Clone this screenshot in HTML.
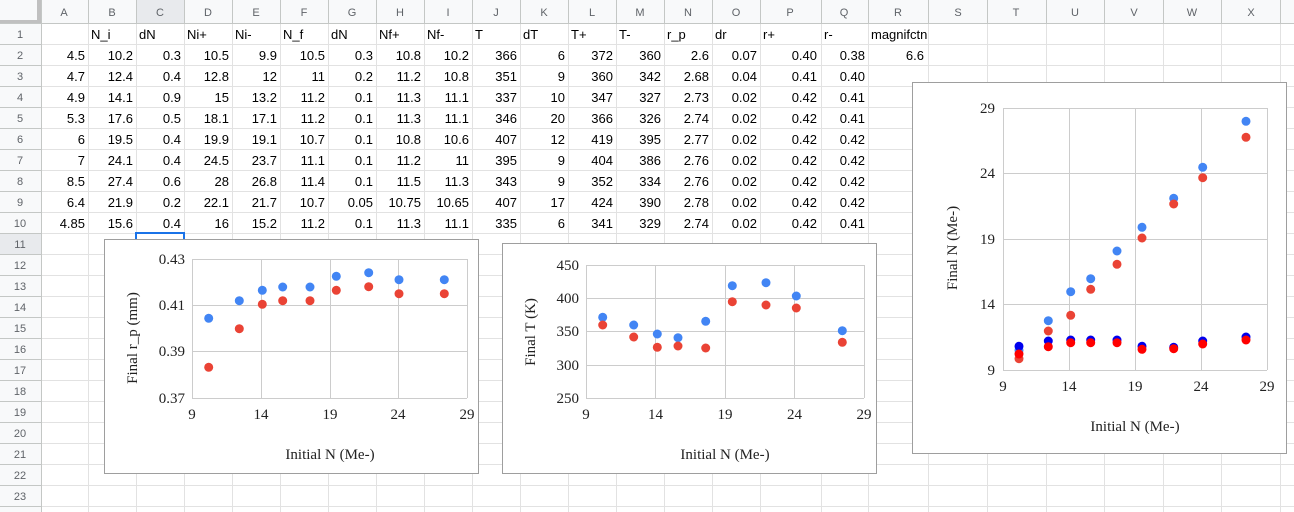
<!DOCTYPE html>
<html><head><meta charset="utf-8"><style>
html,body{margin:0;padding:0;background:#fff;width:1294px;height:512px;overflow:hidden}
svg{display:block}
.h{font-family:"Liberation Sans",sans-serif;font-size:11px;fill:#5f6368;text-anchor:middle}
.c{font-family:"Liberation Sans",sans-serif;font-size:13px;fill:#000}
.r{text-anchor:end}
.t{font-family:"Liberation Serif",serif;font-size:15px;fill:#222}
</style></head><body>
<svg width="1294" height="512" xmlns="http://www.w3.org/2000/svg">
<rect width="1294" height="512" fill="#fff"/>
<!-- header fills -->
<rect x="0" y="0" width="1294" height="23" fill="#f8f9fa"/>
<rect x="0" y="0" width="41" height="512" fill="#f8f9fa"/>
<rect x="136" y="0" width="48" height="23" fill="#e8eaed"/>
<rect x="0" y="233" width="41" height="21" fill="#e8eaed"/>
<g stroke="#e2e2e2" stroke-width="1">
<path d="M41.5 23V512M88.5 23V512M136.5 23V512M184.5 23V512M232.5 23V512M280.5 23V512M328.5 23V512M376.5 23V512M424.5 23V512M472.5 23V512M520.5 23V512M568.5 23V512M616.5 23V512M664.5 23V512M712.5 23V512M760.5 23V512M821.5 23V512M868.5 23V512M928.5 23V512M987.5 23V512M1046.5 23V512M1104.5 23V512M1163.5 23V512M1221.5 23V512M1280.5 23V512"/>
<path d="M41 44.5H1294M41 65.5H1294M41 86.5H1294M41 107.5H1294M41 128.5H1294M41 149.5H1294M41 170.5H1294M41 191.5H1294M41 212.5H1294M41 233.5H1294M41 254.5H1294M41 275.5H1294M41 296.5H1294M41 317.5H1294M41 338.5H1294M41 359.5H1294M41 380.5H1294M41 401.5H1294M41 422.5H1294M41 443.5H1294M41 464.5H1294M41 485.5H1294M41 506.5H1294"/>
</g>
<g stroke="#c4c7c5" stroke-width="1">
<path d="M41.5 0V23M88.5 0V23M136.5 0V23M184.5 0V23M232.5 0V23M280.5 0V23M328.5 0V23M376.5 0V23M424.5 0V23M472.5 0V23M520.5 0V23M568.5 0V23M616.5 0V23M664.5 0V23M712.5 0V23M760.5 0V23M821.5 0V23M868.5 0V23M928.5 0V23M987.5 0V23M1046.5 0V23M1104.5 0V23M1163.5 0V23M1221.5 0V23M1280.5 0V23"/>
<path d="M0 44.5H41M0 65.5H41M0 86.5H41M0 107.5H41M0 128.5H41M0 149.5H41M0 170.5H41M0 191.5H41M0 212.5H41M0 233.5H41M0 254.5H41M0 275.5H41M0 296.5H41M0 317.5H41M0 338.5H41M0 359.5H41M0 380.5H41M0 401.5H41M0 422.5H41M0 443.5H41M0 464.5H41M0 485.5H41M0 506.5H41"/>
<path d="M0 23.5H1294M41.5 0V512"/>
</g>
<rect x="37" y="0" width="4" height="23" fill="#c0c0c0"/>
<rect x="0" y="20" width="41" height="3" fill="#c0c0c0"/>
<!-- column letters -->
<g class="h">
<text x="64" y="16">A</text><text x="112" y="16">B</text><text x="160" y="16">C</text><text x="208" y="16">D</text><text x="256" y="16">E</text><text x="304" y="16">F</text><text x="352" y="16">G</text><text x="400" y="16">H</text><text x="448" y="16">I</text><text x="496" y="16">J</text><text x="544" y="16">K</text><text x="592" y="16">L</text><text x="640" y="16">M</text><text x="688" y="16">N</text><text x="736" y="16">O</text><text x="790" y="16">P</text><text x="844" y="16">Q</text><text x="898" y="16">R</text><text x="958" y="16">S</text><text x="1016" y="16">T</text><text x="1075" y="16">U</text><text x="1134" y="16">V</text><text x="1192" y="16">W</text><text x="1251" y="16">X</text>
<text x="20" y="38">1</text><text x="20" y="59">2</text><text x="20" y="80">3</text><text x="20" y="101">4</text><text x="20" y="122">5</text><text x="20" y="143">6</text><text x="20" y="164">7</text><text x="20" y="185">8</text><text x="20" y="206">9</text><text x="20" y="227">10</text><text x="20" y="248">11</text><text x="20" y="269">12</text><text x="20" y="290">13</text><text x="20" y="311">14</text><text x="20" y="332">15</text><text x="20" y="353">16</text><text x="20" y="374">17</text><text x="20" y="395">18</text><text x="20" y="416">19</text><text x="20" y="437">20</text><text x="20" y="458">21</text><text x="20" y="479">22</text><text x="20" y="500">23</text>
</g>
<!-- row 1 -->
<g class="c">
<text x="91" y="39">N_i</text><text x="139" y="39">dN</text><text x="187" y="39">Ni+</text><text x="235" y="39">Ni-</text><text x="283" y="39">N_f</text><text x="331" y="39">dN</text><text x="379" y="39">Nf+</text><text x="427" y="39">Nf-</text><text x="475" y="39">T</text><text x="523" y="39">dT</text><text x="571" y="39">T+</text><text x="619" y="39">T-</text><text x="667" y="39">r_p</text><text x="715" y="39">dr</text><text x="763" y="39">r+</text><text x="824" y="39">r-</text><text x="871" y="39">magnifctn</text>
</g>
<g class="c r">
<!-- row 2 y=60 -->
<text x="85" y="60">4.5</text><text x="133" y="60">10.2</text><text x="181" y="60">0.3</text><text x="229" y="60">10.5</text><text x="277" y="60">9.9</text><text x="325" y="60">10.5</text><text x="373" y="60">0.3</text><text x="421" y="60">10.8</text><text x="469" y="60">10.2</text><text x="517" y="60">366</text><text x="565" y="60">6</text><text x="613" y="60">372</text><text x="661" y="60">360</text><text x="709" y="60">2.6</text><text x="757" y="60">0.07</text><text x="817" y="60">0.40</text><text x="865" y="60">0.38</text><text x="924" y="60">6.6</text>
<text x="85" y="81">4.7</text><text x="133" y="81">12.4</text><text x="181" y="81">0.4</text><text x="229" y="81">12.8</text><text x="277" y="81">12</text><text x="325" y="81">11</text><text x="373" y="81">0.2</text><text x="421" y="81">11.2</text><text x="469" y="81">10.8</text><text x="517" y="81">351</text><text x="565" y="81">9</text><text x="613" y="81">360</text><text x="661" y="81">342</text><text x="709" y="81">2.68</text><text x="757" y="81">0.04</text><text x="817" y="81">0.41</text><text x="865" y="81">0.40</text>
<text x="85" y="102">4.9</text><text x="133" y="102">14.1</text><text x="181" y="102">0.9</text><text x="229" y="102">15</text><text x="277" y="102">13.2</text><text x="325" y="102">11.2</text><text x="373" y="102">0.1</text><text x="421" y="102">11.3</text><text x="469" y="102">11.1</text><text x="517" y="102">337</text><text x="565" y="102">10</text><text x="613" y="102">347</text><text x="661" y="102">327</text><text x="709" y="102">2.73</text><text x="757" y="102">0.02</text><text x="817" y="102">0.42</text><text x="865" y="102">0.41</text>
<text x="85" y="123">5.3</text><text x="133" y="123">17.6</text><text x="181" y="123">0.5</text><text x="229" y="123">18.1</text><text x="277" y="123">17.1</text><text x="325" y="123">11.2</text><text x="373" y="123">0.1</text><text x="421" y="123">11.3</text><text x="469" y="123">11.1</text><text x="517" y="123">346</text><text x="565" y="123">20</text><text x="613" y="123">366</text><text x="661" y="123">326</text><text x="709" y="123">2.74</text><text x="757" y="123">0.02</text><text x="817" y="123">0.42</text><text x="865" y="123">0.41</text>
<text x="85" y="144">6</text><text x="133" y="144">19.5</text><text x="181" y="144">0.4</text><text x="229" y="144">19.9</text><text x="277" y="144">19.1</text><text x="325" y="144">10.7</text><text x="373" y="144">0.1</text><text x="421" y="144">10.8</text><text x="469" y="144">10.6</text><text x="517" y="144">407</text><text x="565" y="144">12</text><text x="613" y="144">419</text><text x="661" y="144">395</text><text x="709" y="144">2.77</text><text x="757" y="144">0.02</text><text x="817" y="144">0.42</text><text x="865" y="144">0.42</text>
<text x="85" y="165">7</text><text x="133" y="165">24.1</text><text x="181" y="165">0.4</text><text x="229" y="165">24.5</text><text x="277" y="165">23.7</text><text x="325" y="165">11.1</text><text x="373" y="165">0.1</text><text x="421" y="165">11.2</text><text x="469" y="165">11</text><text x="517" y="165">395</text><text x="565" y="165">9</text><text x="613" y="165">404</text><text x="661" y="165">386</text><text x="709" y="165">2.76</text><text x="757" y="165">0.02</text><text x="817" y="165">0.42</text><text x="865" y="165">0.42</text>
<text x="85" y="186">8.5</text><text x="133" y="186">27.4</text><text x="181" y="186">0.6</text><text x="229" y="186">28</text><text x="277" y="186">26.8</text><text x="325" y="186">11.4</text><text x="373" y="186">0.1</text><text x="421" y="186">11.5</text><text x="469" y="186">11.3</text><text x="517" y="186">343</text><text x="565" y="186">9</text><text x="613" y="186">352</text><text x="661" y="186">334</text><text x="709" y="186">2.76</text><text x="757" y="186">0.02</text><text x="817" y="186">0.42</text><text x="865" y="186">0.42</text>
<text x="85" y="207">6.4</text><text x="133" y="207">21.9</text><text x="181" y="207">0.2</text><text x="229" y="207">22.1</text><text x="277" y="207">21.7</text><text x="325" y="207">10.7</text><text x="373" y="207">0.05</text><text x="421" y="207">10.75</text><text x="469" y="207">10.65</text><text x="517" y="207">407</text><text x="565" y="207">17</text><text x="613" y="207">424</text><text x="661" y="207">390</text><text x="709" y="207">2.78</text><text x="757" y="207">0.02</text><text x="817" y="207">0.42</text><text x="865" y="207">0.42</text>
<text x="85" y="228">4.85</text><text x="133" y="228">15.6</text><text x="181" y="228">0.4</text><text x="229" y="228">16</text><text x="277" y="228">15.2</text><text x="325" y="228">11.2</text><text x="373" y="228">0.1</text><text x="421" y="228">11.3</text><text x="469" y="228">11.1</text><text x="517" y="228">335</text><text x="565" y="228">6</text><text x="613" y="228">341</text><text x="661" y="228">329</text><text x="709" y="228">2.74</text><text x="757" y="228">0.02</text><text x="817" y="228">0.42</text><text x="865" y="228">0.41</text>
</g>
<!-- selected cell C11 -->
<rect x="136" y="233" width="48" height="21" fill="none" stroke="#1a73e8" stroke-width="2"/>

<!-- Chart 1 -->
<rect x="104.5" y="239.5" width="374" height="234" fill="#fff" stroke="#9e9e9e"/>
<g stroke="#cccccc" fill="none">
<path d="M192 259.5H467M192 305.5H467M192 351.5H467M192 398.5H467M192.5 259V398M261.5 259V398M330.5 259V398M398.5 259V398M467.5 259V398"/>
</g>
<g class="t r">
<text x="185" y="264">0.43</text><text x="185" y="310">0.41</text><text x="185" y="356">0.39</text><text x="185" y="403">0.37</text>
</g>
<g class="t" text-anchor="middle">
<text x="192" y="419">9</text><text x="261" y="419">14</text><text x="330" y="419">19</text><text x="398" y="419">24</text><text x="467" y="419">29</text>
<text x="330" y="459">Initial N (Me-)</text>
<text transform="translate(137,338) rotate(-90)">Final r_p (mm)</text>
</g>
<g fill="#4285f4">
<circle cx="208.7" cy="318.3" r="4.5"/><circle cx="239.3" cy="300.7" r="4.5"/><circle cx="262.3" cy="290.3" r="4.5"/><circle cx="282.7" cy="287" r="4.5"/><circle cx="310" cy="287" r="4.5"/><circle cx="336.3" cy="276.3" r="4.5"/><circle cx="368.7" cy="272.7" r="4.5"/><circle cx="399" cy="279.7" r="4.5"/><circle cx="444.3" cy="279.7" r="4.5"/>
</g>
<g fill="#ea4335">
<circle cx="208.7" cy="367.3" r="4.5"/><circle cx="239.3" cy="328.7" r="4.5"/><circle cx="262.3" cy="304.3" r="4.5"/><circle cx="282.7" cy="300.7" r="4.5"/><circle cx="310" cy="300.7" r="4.5"/><circle cx="336.3" cy="290.3" r="4.5"/><circle cx="368.7" cy="286.7" r="4.5"/><circle cx="399" cy="293.7" r="4.5"/><circle cx="444.3" cy="293.7" r="4.5"/>
</g>

<!-- Chart 2 -->
<rect x="502.5" y="243.5" width="374" height="230" fill="#fff" stroke="#9e9e9e"/>
<g stroke="#cccccc" fill="none">
<path d="M586 265.5H864M586 298.5H864M586 331.5H864M586 365.5H864M586 398.5H864M586.5 265V398M655.5 265V398M725.5 265V398M794.5 265V398M864.5 265V398"/>
</g>
<g class="t r">
<text x="579" y="270">450</text><text x="579" y="303">400</text><text x="579" y="336">350</text><text x="579" y="370">300</text><text x="579" y="403">250</text>
</g>
<g class="t" text-anchor="middle">
<text x="586" y="419">9</text><text x="655.5" y="419">14</text><text x="725" y="419">19</text><text x="794.5" y="419">24</text><text x="864" y="419">29</text>
<text x="725" y="459">Initial N (Me-)</text>
<text transform="translate(535,332) rotate(-90)">Final T (K)</text>
</g>
<g fill="#4285f4">
<circle cx="602.7" cy="317.3" r="4.5"/><circle cx="633.7" cy="325" r="4.5"/><circle cx="657.3" cy="334" r="4.5"/><circle cx="678" cy="337.7" r="4.5"/><circle cx="705.7" cy="321.3" r="4.5"/><circle cx="732.3" cy="285.7" r="4.5"/><circle cx="766" cy="282.7" r="4.5"/><circle cx="796.3" cy="296" r="4.5"/><circle cx="842.3" cy="330.7" r="4.5"/>
</g>
<g fill="#ea4335">
<circle cx="602.7" cy="325" r="4.5"/><circle cx="633.7" cy="337" r="4.5"/><circle cx="657.3" cy="347.3" r="4.5"/><circle cx="678" cy="346" r="4.5"/><circle cx="705.7" cy="348" r="4.5"/><circle cx="732.3" cy="301.7" r="4.5"/><circle cx="766" cy="305" r="4.5"/><circle cx="796.3" cy="308" r="4.5"/><circle cx="842.3" cy="342.3" r="4.5"/>
</g>

<!-- Chart 3 -->
<rect x="912.5" y="82.5" width="374" height="371" fill="#fff" stroke="#9e9e9e"/>
<g stroke="#cccccc" fill="none">
<path d="M1003 108.5H1267M1003 173.5H1267M1003 239.5H1267M1003 304.5H1267M1003 370.5H1267M1003.5 108V370M1069.5 108V370M1135.5 108V370M1201.5 108V370M1267.5 108V370"/>
</g>
<g class="t r">
<text x="995" y="113">29</text><text x="995" y="178">24</text><text x="995" y="244">19</text><text x="995" y="309">14</text><text x="995" y="375">9</text>
</g>
<g class="t" text-anchor="middle">
<text x="1003" y="391">9</text><text x="1069" y="391">14</text><text x="1135" y="391">19</text><text x="1201" y="391">24</text><text x="1267" y="391">29</text>
<text x="1135" y="431">Initial N (Me-)</text>
<text transform="translate(957,248) rotate(-90)">Final N (Me-)</text>
</g>
<g fill="#4285f4">
<circle cx="1019" cy="350.3" r="4.5"/><circle cx="1048.3" cy="320.7" r="4.5"/><circle cx="1070.7" cy="291.7" r="4.5"/><circle cx="1090.7" cy="278.7" r="4.5"/><circle cx="1117" cy="251" r="4.5"/><circle cx="1142" cy="227.3" r="4.5"/><circle cx="1173.7" cy="198.3" r="4.5"/><circle cx="1202.7" cy="167.3" r="4.5"/><circle cx="1246" cy="121.3" r="4.5"/>
</g>
<g fill="#ea4335">
<circle cx="1019" cy="358.7" r="4.5"/><circle cx="1048.3" cy="331" r="4.5"/><circle cx="1070.7" cy="315.3" r="4.5"/><circle cx="1090.7" cy="289.3" r="4.5"/><circle cx="1117" cy="264.3" r="4.5"/><circle cx="1142" cy="238" r="4.5"/><circle cx="1173.7" cy="204" r="4.5"/><circle cx="1202.7" cy="177.7" r="4.5"/><circle cx="1246" cy="137.3" r="4.5"/>
</g>
<g fill="#0000ee">
<circle cx="1019" cy="346.3" r="4.5"/><circle cx="1048.3" cy="341" r="4.5"/><circle cx="1070.7" cy="340" r="4.5"/><circle cx="1090.7" cy="340" r="4.5"/><circle cx="1117" cy="340" r="4.5"/><circle cx="1142" cy="346.3" r="4.5"/><circle cx="1173.7" cy="347.3" r="4.5"/><circle cx="1202.7" cy="341" r="4.5"/><circle cx="1246" cy="337" r="4.5"/>
</g>
<g fill="#ff0000">
<circle cx="1019" cy="354" r="4.5"/><circle cx="1048.3" cy="346.7" r="4.5"/><circle cx="1070.7" cy="342.7" r="4.5"/><circle cx="1090.7" cy="342.7" r="4.5"/><circle cx="1117" cy="342.7" r="4.5"/><circle cx="1142" cy="349.3" r="4.5"/><circle cx="1173.7" cy="348.7" r="4.5"/><circle cx="1202.7" cy="344" r="4.5"/><circle cx="1246" cy="340" r="4.5"/>
</g>
</svg>
</body></html>
